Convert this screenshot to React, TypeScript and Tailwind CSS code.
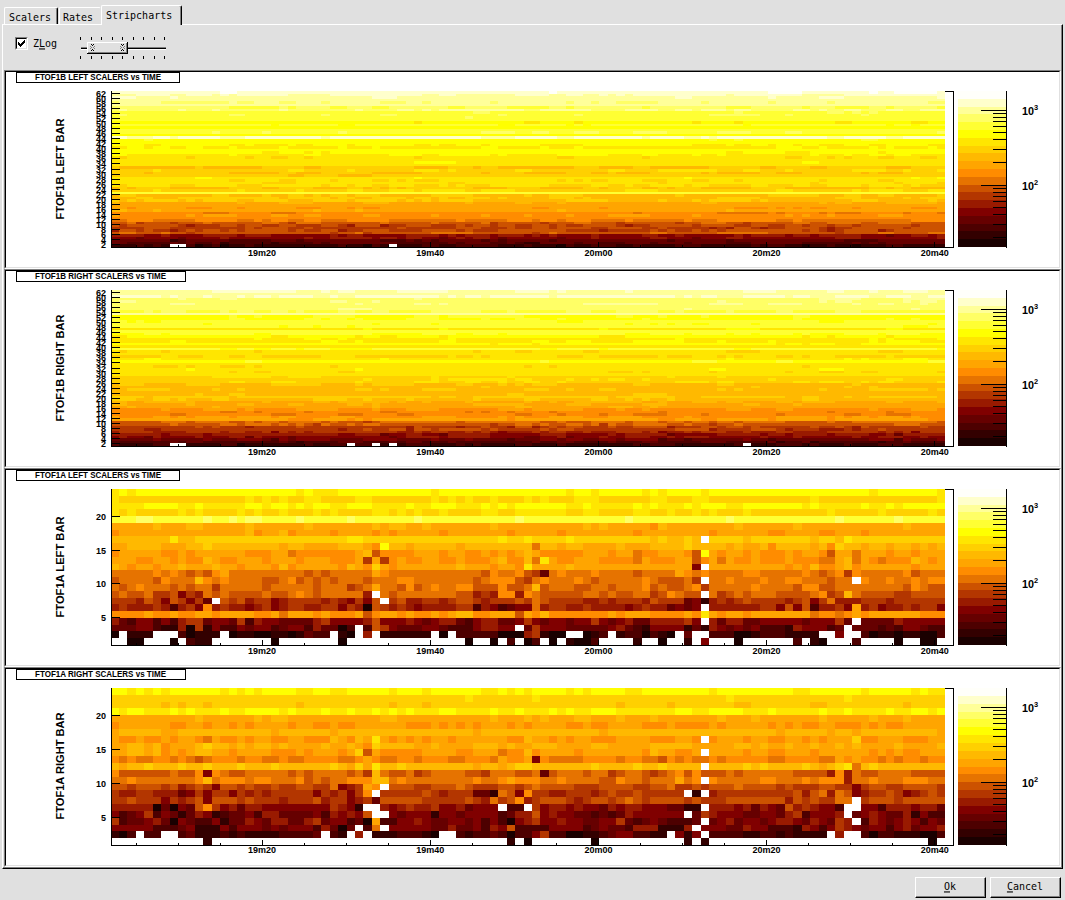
import React from "react";

const COLORS: Record<string, string> = {
  a: "#1a0000", b: "#330000", c: "#4d0000", d: "#660000", e: "#800000",
  f: "#991a00", g: "#b33600", h: "#cc5200", i: "#e67300", j: "#ff8c00",
  k: "#ffa500", l: "#ffb900", m: "#ffd000", n: "#ffe600", o: "#ffff00",
  p: "#ffff33", q: "#ffff66", r: "#ffff99", s: "#ffffcc", t: "#fffffa",
  w: "#ffffff",
};
const SCALE = "abcdefghijklmnopqrst";
const COLS = 99;
const X0 = 110.6;
const CELL = (945 - X0) / COLS;

/* Run-length rows, three segments of 34 + 34 + 31 columns. */
const A_LEFT = [
  "n o n o19 n o n2 n o7|o4 n o15 n o2 n o5 n o n o2|o2 n o19 n o7 n",
  "n m15 n m n m n m2 n2 m4 n2 m3|m4 n m n m n m2 n m3 n m n m3 n3 m6 n2 m2|m n2 m12 n m14 n",
  "n4 o4 n2 o n5 o2 n o2 n o n o2 n2 o3 n2|n o n2 o3 n3 o n o n o6 n2 o n5 o n o n3|o n o3 n2 o7 n o n5 o n2 o n o4",
  "n m n m5 n m n m4 n m n m2 n m3 n m n m4 n2 m|n m n m2 n m4 n2 m2 n6 m2 n2 m4 n2 m2 n m|m n m n m3 n m9 n m5 n m5 n m2",
  "p3 q2 p6 q p2 q p q2 p4 q p5 q p5|p2 q p11 q p12 q p6|p5 q p12 q p6 q p5",
  "k5 l k3 l2 k5 l k6 l k7 l k l|l k2 l k7 l k10 l k l k5 j l k2|k6 l k6 l k12 l k4",
  "j k15 l j k2 l j k4 j k4 j k j|k5 j k7 j k5 j k8 j k5|k3 j k6 j2 k4 j2 k3 j k9",
  "l7 n l2 m18 n2 m4|m12 n m2 n m4 n m9 l m l2|m l w m4 l m7 l m2 l n m11",
  "k2 l4 k3 l2 m l8 k l2 k4 l3 k j o l|l k l5 k l8 i l2 k l2 k4 l k3 l4|m l4 k l k2 l j l4 k l j m l2 k l2 k l2 k l k l",
  "j k5 j2 k j k6 j3 k2 i j7 k l h j2|j2 k3 j k2 j2 k j k j k l k j5 k3 j k2 i j2 k2|j h o k j k2 j k j3 k j k2 j h k2 i k3 j k2 j k3",
  "k3 j2 k2 j k j2 l k j2 k3 j k3 j k3 j3 k g k g j|k j2 k2 j2 k j3 k l j2 l i n k j2 k3 j3 j i k j3 k|k h j k i k j2 k j3 k j3 i2 k l i k j i j3 l k j k2",
  "l k j k2 j k2 l k3 l k2 j k3 j l j k5 j l k j m k j|k7 l k3 j k2 j n k4 l k12|k e w k9 j k j l j2 k l j k6 j k3",
  "i5 j i j i h i h j k i5 i4 h i h i4 i k j i2|i10 h j i2 j h g d i j i3 j i4 h i4 k|j i j i4 j2 i5 j i h i j g j i5 j h i2",
  "h i4 h j i3 l j i j i4 h2 i j h i h i h i2 i h i i|j2 i7 h i j3 h g i j i3 j i h i5 j i h|i g w i2 j i3 j i2 j2 i3 h i2 w j i2 j i2 j i j2",
  "i h i j i2 i h i h i2 g i5 h i5 h i3 g h i k i2|h j h i j i2 j2 h3 j h2 i l h i3 h2 i2 h i i2 j h i h|i j g i5 j i4 h j2 h2 i3 i5 h j i h2",
  "h i h2 i g2 h e g f i h i h4 i h2 i j i h i5 f w i h|i7 h2 f g f j2 f j i h5 i2 h i h2 i2 g h j i|h2 w i g h i h i3 h4 i j g h l i h h3 g2 h4",
  "g3 f h g e h g e g d w h g h f g2 e f g4 f g f e g e h w g|h f2 g2 f g h2 g f g3 h g i h g4 f2 g f g2 g f h g|d e b f g f g h g g2 g f g h e g i f f2 g g2 f g4",
  "f g f3 g f c f g e j f g f2 e f g e f g2 f2 g2 e g f a h g f|g f e f4 g2 c f e c d e2 i f g2 f2 g f3 f e f g f2 d e|d e w f6 g2 e h e h c f2 g e k f g e f2 g f g2 e",
  "j4 k j2 k j2 k2 j k3 k j2 k i k3 j k j3 k h j k|j k j2 k j k l2 j2 k3 h k j l j6 j k j k3 j4|k j n k j k2 j k5 k k i j2 i j k j k3 k3 j2 j",
  "f d c e2 c e c f g2 d e e d g c f e2 d4 f g e3 e f h e2|e f e d e f2 d c e f2 d2 e g e d e2 d e2 g e d e f d2 f|g e w f d f2 d2 e4 e d e3 g d w d3 d f e3 e2",
  "d3 e2 c b2 f a g b e c c e d e2 c d e2 c f d d a c w c h g e|d3 e2 d c3 e f2 e e w d g e e2 d4 d e f d c b e3|b d b f e d e d e c3 b f e3 c d w d2 d c d c e2 d c",
  "a w b3 w3 c a b3 w a b2 a2 b2 a b d c2 w b a w f w b b|b4 w a w c5 a3 f g b a2 w2 a b c w b c2 a c b a w|d w2 c3 a2 b c c2 b4 w2 e w2 c a b2 a b b a2 c",
  "w2 a2 w3 a w c b2 w7 a w7 a w6|w8 a w2 a w c w a c w a w b a2 c w4 b w2 a w2|b w e w3 a w6 c w b a w3 c w4 a w2 a2 w",
];

const A_RIGHT = [
  "o2 n o n o n o6 n o n o n o4 n2 o2 n2 o5 n|o3 n o6 n2 o n o n o4 n o n o4 n2 o5|o3 n o9 n2 o6 n o5 n o n2",
  "m34|m8 n m7 n m17|m5 n m13 n m11",
  "m6 l m l m2 l m10 l m10 l|m3 l m22 l m5 l m|m6 l2 m7 l2 m9 l m4",
  "o n o2 n3 o n o n3 o n2 o4 n o n3 o n2 o n2 o n o|n o n3 o2 n4 o n2 o n3 o n o n2 o3 n7 o n|o n2 o4 n3 o n5 o n2 o n4 o n2 o2 n o",
  "k10 l k6 l k l2 k11 l2|k11 l k3 l k l k3 l2 k3 l k3 l k3|k4 l k3 l k7 l k5 l k3 l k4",
  "j k6 j2 k2 j k2 j k j k4 j k2 j2 k j2 k5|k j3 k j k j k j k3 j k j k4 j2 k j2 k4 j3 k j|j3 k j k5 j k j k j2 k2 j3 k j k j2 k5",
  "k l5 k2 l11 k l6 k l7|l9 k l14 k l9|l11 k l5 k l2 k l9 k",
  "k j2 k j2 k j k2 j i k j2 k j k2 j2 k2 j3 l k j l k n k j|k j k j k2 j k6 j2 l k2 j k j k2 j3 k4 j3 k|k j w j k3 j k2 j2 k2 j k j k3 m j2 k3 j3 k2",
  "k2 l2 k l j k3 l m l2 k l k l2 k l k4 l k2 l k j m l|l2 k2 l k4 l3 k l k2 l3 k4 l2 k5 l4 k|l k k k3 l2 k l k2 l k2 l k2 l k l k3 k l k2 k k l",
  "k2 l2 k l j k j k l2 k2 j k3 k j3 k j k2 k j k m h k j|j3 k4 j2 k3 i j2 l j k4 j k7 j l k2 j|j k w k4 j k2 j2 k3 j k2 k2 k k j k j k j2 k3",
  "j i j i2 j2 i j i h i j3 i j j i2 j i2 j4 i2 j k j i|j2 i j3 i2 j3 i k j2 k e j i2 i2 j4 i j2 i2 h j i j|j i2 j i j5 i2 j4 i2 k j k j2 i j i j2 i j2",
  "l k l2 m l3 m l2 m l3 m l3 m l6 m l k m k n l2|m l8 k l2 k l m2 l6 l m l4 m l2 m l2|l2 w l4 m l m l4 m l k l m n i l m l8",
  "j h6 i h2 j e j i h2 i5 h i h i4 h i g l i h|h i g h i4 h2 g i3 h h i d h i3 h i2 g h i2 h g h i j|h j h h h i h i6 h4 f j f i h2 i2 i2 h5",
  "i2 j i7 j l i j3 i j2 i2 i j h i h i2 j3 l2 i|j i8 j i2 j k j3 i2 j i3 i h2 j i2 h i2 i k|i j w j i4 i j2 i3 j i j3 f i2 j i3 j3 i",
  "h2 g h3 g h f g h g e h2 g h g2 h g2 h2 g2 i e f g k j w h|h2 g2 h3 i h g3 h2 g h i h4 g3 h3 h g g h2 i g|g h g h3 i h h3 g h g3 h2 g2 e g h2 g2 h4 g",
  "g f2 g2 f3 d e g e g2 e g f g f g2 g g2 e g f g e g j w g2|g3 h g f g3 d2 b i h e j g g f2 g g2 f g h g2 h g g g|w b w f g5 g4 h f h i f i h e f g2 h g e f g h g",
  "g2 h g3 e g f g h e h3 g h g2 g f g2 g h f g2 e f g d h2|h3 g3 g2 h g f i g h j f g h2 h g f g h2 g h i h g h|g h g g2 h3 h4 f h g h g2 i2 w g h h2 g h h3",
  "f5 a d a e d h j g e f d f2 e8 g f e b w2 f e|f g f2 g e2 f d e2 e w c c w g e f2 e f e2 d f e f2 e3 d2|b2 w f3 e f d f e d h f g f e2 c w2 e2 c f3 e f2 d",
  "e c d e g c e d b d f e b c d2 e c f f d4 e c f e f e h w2 e|d e3 b e e d e e3 c d f2 h e f e2 d2 c d c d f e2 e e e|w d g f e e2 d2 e2 d f g c e3 f w d e f e d d f b e c",
  "g c d2 e f d a e d c c e b d2 f e d f f d2 f g d e e c d a k c|e e f e d2 e2 d e c e c a e f g e e f e2 d2 e e g d c d e d c|c d w d e f d e2 d e f2 e d f e d g f w c f e d e f e c e d",
  "e5 c3 d e b3 e c e3 d e d e2 e c f d a d w c i w e|e4 d2 f d2 e c f e h c c2 c e4 c d e d d c f f f b|f w e e2 d2 f e2 c3 b f e c e g f e d e2 c e f d e2 f",
  "b a c w c2 w2 c d b2 b c b c b4 c3 c d w c b w f w b2 b|c3 b a w2 c b c c d c a c c e g c2 a2 b b c d e e c2 b b w e|b e w c4 b2 c c b c b2 b b w f w2 c a c c b b b a2 c",
  "w11 b w22|w13 b w a w7 a w10|b w b w26 a w",
];

/* One entry per bar: usual colour, alternate colour, share of the alternate in tenths. */
const B_LEFT =
  "st1 sr3 rs1 rr0 rq3 rq0 qp3 rq5 pq1 pq2 pq1 po0 on1 po1 op0 po0 pq2 op0 sr2 op1 on0 on4 no2 op0 on2 no3 nm2 nm0 no1 nm0 lm5 mn4 lm5 ml1 no1 nm3 nm1 nm3 lm5 mn3 po0 lm3 ml4 lm4 kl2 kl0 kj3 kl1 ji2 jk3 jk0 ij4 hi3 hg4 gh4 hg5 hi3 fe3 ef4 dc2 dc4 bc3".split(" ");
const B_RIGHT =
  "rs3 rs0 sr3 qr1 qr2 qr3 qr0 qr1 pq5 rq0 op2 op3 po1 po2 po1 no1 pq0 po2 on2 no1 no2 on1 nm0 po3 nm2 nm0 mn4 no1 op1 nm0 nm1 no1 nm2 nm0 mn1 mn2 mn4 lm3 lm1 lm3 lm0 lm1 ml2 lm3 kl5 kl3 kl1 jk3 ji2 ji3 kj4 kj2 ih3 hi3 gh4 gh2 gf4 fe3 ef3 de4 cd4 bc4".split(" ");

function expand(segment: string, size: number) {
  let out = "";
  for (const t of segment.trim().split(/\s+/)) {
    out += t[0].repeat(parseInt(t.slice(1), 10) || 1);
  }
  while (out.length < size) out += out[out.length - 1];
  return out.slice(0, size);
}

function fromRuns(rows: string[]) {
  return rows.map((r) => {
    const p = r.split("|");
    return expand(p[0], 34) + expand(p[1], 34) + expand(p[2], 31);
  });
}

function fromProfile(rows: string[], seed: number, gaps: number[]) {
  let s = seed;
  const rnd = () => {
    s = (s * 1664525 + 1013904223) % 4294967296;
    return s / 4294967296;
  };
  return rows.map((p, r) => {
    const share = parseInt(p[2], 10) / 10;
    let line = "";
    let alt = false;
    for (let c = 0; c < COLS; c++) {
      if (rnd() < 0.66) alt = rnd() < share;
      let ch = alt ? p[1] : p[0];
      if (r > 51 && rnd() < 0.1) ch = SCALE[Math.max(0, SCALE.indexOf(ch) - 1)];
      if (r === rows.length - 1 && gaps.includes(c)) ch = "w";
      line += ch;
    }
    return line;
  });
}

function Cells({ rows, height }: { rows: string[]; height: number }) {
  const out: React.ReactElement[] = [];
  const edge = (c: number) => (c === 0 ? 112 : Math.round(X0 + c * CELL));
  rows.forEach((row, r) => {
    const y = Math.round(21 + (r * height) / rows.length);
    const y2 = Math.round(21 + ((r + 1) * height) / rows.length);
    let c = 0;
    while (c < COLS) {
      let e = c + 1;
      while (e < COLS && row[e] === row[c]) e++;
      if (row[c] !== "w")
        out.push(
          <rect key={r + "-" + c} x={edge(c)} y={y} width={edge(e) - edge(c)} height={y2 - y} fill={COLORS[row[c]]} />
        );
      c = e;
    }
  });
  return <g>{out}</g>;
}

interface ChartProps {
  name: string;
  side: string;
  rows: string[];
  max: number;
  step: number;
  tall?: boolean;
}

const MINOR = [3, 7, 11, 16, 22, 29, 39, 52];

function Chart({ name, side, rows, max, step, tall }: ChartProps) {
  const h = tall ? 157 : 156;
  const bottom = 21 + h;
  const right = side === "RIGHT";
  const labels: number[] = [];
  for (let v = step; v < max; v += step) labels.push(v);
  const minors: number[] = [];
  for (let i = 0; i < 20; i++) minors.push(136 + i * 42);
  return (
    <div
      className={
        (tall ? "h-[200px]" : "h-[199px]") +
        " w-[1057px] border border-t-[#808080] border-l-[#808080] border-r-white border-b-white"
      }
    >
      <div className="h-full w-full border border-t-black border-l-black border-r-[#e0e0e0] border-b-[#e0e0e0] bg-white">
        <svg
          width="1053"
          height={tall ? 196 : 195}
          viewBox={tall ? "6 2 1053 196" : "6 2 1053 195"}
          className="block font-['Liberation_Sans',Arial,sans-serif] font-bold"
          shapeRendering="crispEdges"
        >
          <path d={right ? "M16.5 2V12.5H185.5V2.5H16" : "M16.5 2V12.5H179.5V2.5H16"} fill="none" stroke="#000" />
          <text x="35" y="10" fontSize="8.6" textLength={right ? 131 : 126} lengthAdjust="spacingAndGlyphs">
            {`${name} ${side} SCALERS vs TIME`}
          </text>
          <text
            transform="translate(64 99) rotate(-90)"
            textAnchor="middle"
            fontSize="11"
            textLength={right ? 107 : 101}
            lengthAdjust="spacingAndGlyphs"
          >
            {`${name} ${side} BAR`}
          </text>
          <Cells rows={rows} height={h} />
          <path d={`M111.5 21V${bottom + 0.5}H953.5V21.5H945`} fill="none" stroke="#000" />
          {labels.map((v) => {
            const y = Math.floor(bottom - ((v - 1) * h) / (max - 1));
            return (
              <g key={v}>
                <rect x="111" y={y} width="9" height="1" />
                <text
                  x={v < 10 ? 101 : 96}
                  y={y + 4}
                  fontSize="9.6"
                  textLength={v < 10 ? 5 : 10}
                  lengthAdjust="spacingAndGlyphs"
                >
                  {v}
                </text>
              </g>
            );
          })}
          {minors.map((x, i) => (
            <rect key={x} x={x} y={i % 4 === 3 ? bottom - 5 : bottom - 2} width="1" height={i % 4 === 3 ? 5 : 2} />
          ))}
          {["19m20", "19m40", "20m00", "20m20", "20m40"].map((t, i) => (
            <text
              key={t}
              x={262 + i * 168.2}
              y="186"
              fontSize="9.4"
              textAnchor="middle"
              textLength="28"
              lengthAdjust="spacingAndGlyphs"
            >
              {t}
            </text>
          ))}
          {SCALE.split("").map((c, i) => {
            const y = Math.round(bottom - ((i + 1) * h) / 20);
            return (
              <rect key={c} x="958" y={y} width="48" height={Math.round(bottom - (i * h) / 20) - y} fill={COLORS[c]} />
            );
          })}
          <rect x="1006" y="21" width="1" height={h + 1} />
          {[40, 115].map((y) => (
            <g key={y}>
              <rect x="981" y={y} width="25" height="1" />
              {MINOR.map((m) => (
                <rect key={m} x="993" y={y + m} width="13" height="1" />
              ))}
              <text x="1022" y={y + 5} fontSize="11.2" textLength="12" lengthAdjust="spacingAndGlyphs">
                10
              </text>
              <text x="1034" y={y} fontSize="7.4">
                {y === 40 ? "3" : "2"}
              </text>
            </g>
          ))}
        </svg>
      </div>
    </div>
  );
}

function Label({ children }: { children: React.ReactNode }) {
  return (
    <span className="block origin-center scale-y-110 font-['DejaVu_Sans_Mono',monospace] text-[10px] leading-[12px] whitespace-pre text-black">
      {children}
    </span>
  );
}

function Slider() {
  const ticks = Array.from({ length: 9 }, (_, i) => Math.round(i * 10.5));
  return (
    <svg width="87" height="22" viewBox="0 0 87 22" shapeRendering="crispEdges" className="mt-[12px] ml-[23px] block">
      {ticks.map((x) => (
        <g key={x}>
          <rect x={x} y="0" width="1" height="3" />
          <rect x={x} y="19" width="1" height="3" />
        </g>
      ))}
      <rect x="1" y="10" width="85" height="1" fill="#808080" />
      <rect x="1" y="11" width="85" height="1" />
      <rect x="1" y="12" width="85" height="1" fill="#fff" />
      <rect x="7" y="5" width="41" height="12" />
      <rect x="7" y="5" width="40" height="11" fill="#fff" />
      <rect x="8" y="6" width="39" height="10" fill="#808080" />
      <rect x="8" y="6" width="38" height="9" fill="#e0e0e0" />
      {[10, 40].map((x) =>
        [[1, 0], [3, 0], [0, 2], [2, 1], [4, 2], [1, 3], [3, 3], [0, 4], [4, 4], [2, 5], [1, 6], [3, 6]].map(([a, b]) => (
          <rect key={x + "-" + a + "-" + b} x={x + a} y={7 + b} width="1" height="1" fill={(a + b) % 2 ? "#000" : "#808080"} />
        ))
      )}
    </svg>
  );
}

function Button({ first, rest }: { first: string; rest: string }) {
  return (
    <button className="h-[21px] w-[71px] border border-t-white border-r-black border-b-black border-l-white">
      <span className="flex h-full w-full items-center justify-center border-r border-b border-[#808080]">
        <Label>
          <u className="underline-offset-1">{first}</u>
          {rest}
        </Label>
      </span>
    </button>
  );
}

const TAB = "flex rounded-t-[2px] border-t border-l border-r border-t-white border-l-white ";

export default function App() {
  return (
    <div className="flex h-[900px] w-[1065px] flex-col overflow-hidden bg-[#e0e0e0]">
      <div className="flex h-[24px] items-end pl-[4px]">
        <div className={TAB + "h-[17px] w-[54px] border-r-black pt-[4px] pl-[4px] shadow-[inset_-1px_0_0_#808080]"}>
          <Label>Scalers</Label>
        </div>
        <div className={TAB + "ml-px h-[17px] w-[42px] border-r-transparent pt-[4px] pl-[3px]"}>
          <Label>Rates</Label>
        </div>
        <div
          className={
            TAB + "relative z-10 -mb-px h-[20px] w-[81px] border-r-black bg-[#e0e0e0] pt-[4px] pl-[4px] shadow-[inset_-1px_0_0_#808080]"
          }
        >
          <Label>Stripcharts</Label>
        </div>
      </div>
      <div className="ml-[2px] h-[845px] w-[1061px] border border-t-white border-r-black border-b-black border-l-white">
        <div className="h-full w-full border-r border-b border-[#808080] pl-px">
          <div className="flex h-[45px] pl-[11px]">
            <span className="mt-[12px] h-[13px] w-[13px] border border-t-[#808080] border-r-white border-b-white border-l-[#808080]">
              <span className="flex h-[11px] w-[11px] border border-t-black border-r-[#e0e0e0] border-b-[#e0e0e0] border-l-black bg-white">
                <svg width="9" height="9" viewBox="0 0 9 9" shapeRendering="crispEdges">
                  <path d="M1 3h1v1h1v1h1v-1h1v-1h1v-1h1v-1h1v3h-1v1h-1v1h-1v1h-1v1h-1v-1h-1v-1h-1z" />
                </svg>
              </span>
            </span>
            <div className="mt-[13px] ml-[5px]">
              <Label>
                Z<u className="underline-offset-1">L</u>og
              </Label>
            </div>
            <Slider />
          </div>
          <Chart name="FTOF1B" side="LEFT" rows={fromProfile(B_LEFT, 17, [7, 8, 33])} max={63} step={2} />
          <Chart name="FTOF1B" side="RIGHT" rows={fromProfile(B_RIGHT, 92, [7, 8, 28, 31, 33, 75])} max={63} step={2} />
          <Chart name="FTOF1A" side="LEFT" rows={fromRuns(A_LEFT)} max={24} step={5} />
          <Chart name="FTOF1A" side="RIGHT" rows={fromRuns(A_RIGHT)} max={24} step={5} tall />
        </div>
      </div>
      <div className="flex justify-end gap-[4px] pt-[8px] pr-[4px]">
        <Button first="O" rest="k" />
        <Button first="C" rest="ancel" />
      </div>
    </div>
  );
}
